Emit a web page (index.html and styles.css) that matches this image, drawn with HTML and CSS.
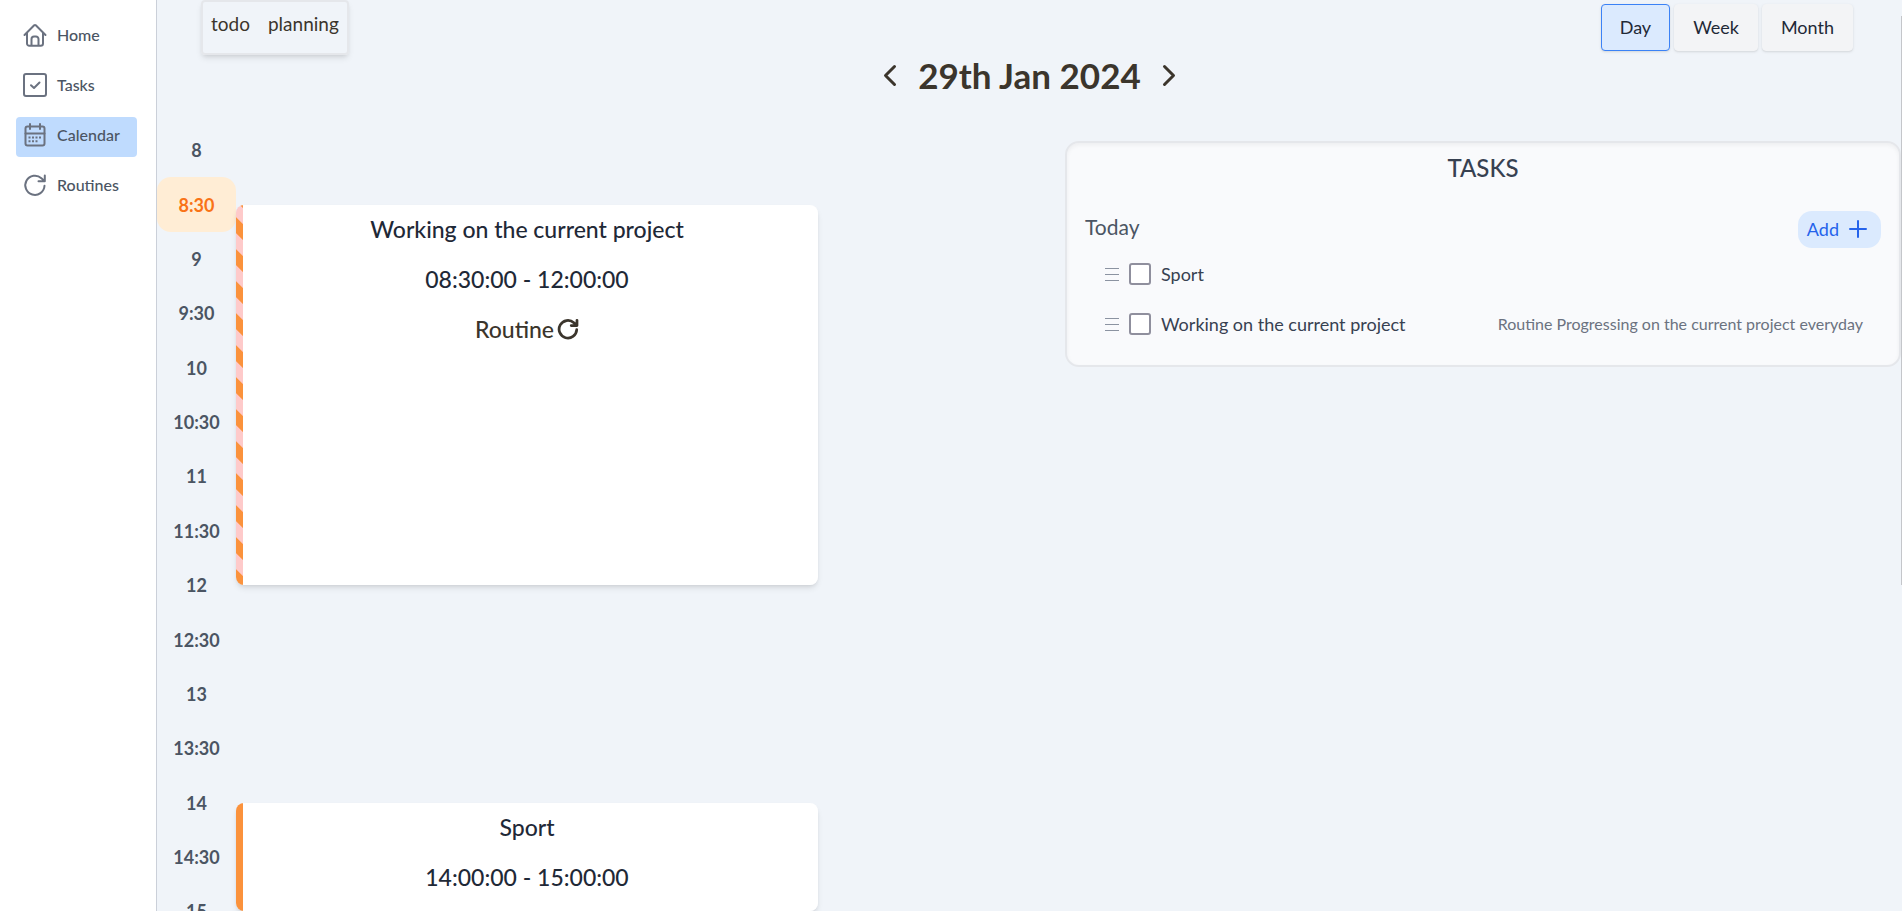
FILE: index.html
```html
<!DOCTYPE html>
<html lang="en">
<head>
<meta charset="utf-8">
<meta name="viewport" content="width=device-width, initial-scale=1">
<title>Calendar</title>
<link rel="stylesheet" href="styles.css">
</head>
<body>
<svg class="sprite" aria-hidden="true">
  <symbol id="rotate" viewBox="0 0 24 24"><path d="M21.500 12.800A9.600 9.600 0 1 1 18.400 5.200L21.500 8M21.800 2.500V8.300H15.500"/></symbol>
  <symbol id="grip" viewBox="0 0 14 14"><path d="M0 1.500H14M0 7.500H14M0 13.500H14"/></symbol>
</svg>
<div class="app">
  <nav class="sidebar">
    <a class="nav-item" href="#home">
      <svg class="nav-icon" viewBox="0 0 24 24"><path d="M1.500 12 11.200 2.300a1.200 1.200 0 0 1 1.600 0L22.500 12M4 9.800V20.500A2.300 2.300 0 0 0 6.300 22.800H17.700A2.300 2.300 0 0 0 20 20.500V9.800M8.500 22.500V16A2.500 2.500 0 0 1 11 13.500H13A2.500 2.500 0 0 1 15.500 16V22.500"/></svg>
      <span>Home</span>
    </a>
    <a class="nav-item" href="#tasks">
      <svg class="nav-icon" viewBox="0 0 24 24"><rect x="1" y="1" width="22" height="22" rx="2"/><path d="M8 12.200 11 15 16.500 9.500"/></svg>
      <span>Tasks</span>
    </a>
    <a class="nav-item active" href="#calendar" aria-current="page">
      <svg class="nav-icon" viewBox="0 0 24 24"><rect x="2.500" y="3.500" width="19" height="19" rx="2"/><path d="M2.500 10.500H21.500M7 1V6M17 1V6"/><path class="dots" d="M5.500 14.500h2M9 14.500h2M12.500 14.500h2M16 14.500h2M5.500 18.300h2M9 18.300h2M12.500 18.300h2"/></svg>
      <span>Calendar</span>
    </a>
    <a class="nav-item" href="#routines">
      <svg class="nav-icon"><use href="#rotate"/></svg>
      <span>Routines</span>
    </a>
  </nav>
  <main class="main">
    <header class="toolbar">
      <div class="modes">
        <button type="button">todo</button>
        <button type="button">planning</button>
      </div>
      <div class="views">
        <button type="button" class="selected">Day</button>
        <button type="button">Week</button>
        <button type="button">Month</button>
      </div>
    </header>
    <div class="date-bar">
      <button type="button" aria-label="Previous day"><svg viewBox="0 0 14 24"><path d="M11.500 3.500 2.500 12.500l9 9"/></svg></button>
      <h1>29th Jan 2024</h1>
      <button type="button" aria-label="Next day"><svg viewBox="0 0 14 24"><path d="M2.500 3.500 11.500 12.500l-9 9"/></svg></button>
    </div>
    <div class="content">
      <section class="schedule">
        <ol class="hours">
          <li>8</li><li class="now">8:30</li><li>9</li><li>9:30</li><li>10</li><li>10:30</li><li>11</li><li>11:30</li>
          <li>12</li><li>12:30</li><li>13</li><li>13:30</li><li>14</li><li>14:30</li><li>15</li><li>15:30</li>
        </ol>
        <div class="events">
          <article class="event striped">
            <h2>Working on the current project</h2>
            <p>08:30:00 - 12:00:00</p>
            <p class="routine">Routine<svg><use href="#rotate"/></svg></p>
          </article>
          <article class="event sport">
            <h2>Sport</h2>
            <p>14:00:00 - 15:00:00</p>
          </article>
        </div>
      </section>
      <section class="tasks">
        <h2>TASKS</h2>
        <div class="tasks-head">
          <h3>Today</h3>
          <button type="button" class="add">Add<svg viewBox="0 0 18 18"><path d="M9 1V17M1 9H17"/></svg></button>
        </div>
        <ul>
          <li><svg class="grip"><use href="#grip"/></svg><input type="checkbox" id="t1"><label for="t1">Sport</label></li>
          <li><svg class="grip"><use href="#grip"/></svg><input type="checkbox" id="t2"><label for="t2">Working on the current project</label><small>Routine Progressing on the current project everyday</small></li>
        </ul>
      </section>
    </div>
    <div class="scroll-thumb"></div>
  </main>
</div>
</body>
</html>
```
FILE: styles.css
```css
* { box-sizing: border-box; }
body {
  margin: 0;
  font: 18px/28px Lato, "Open Sans", sans-serif;
  color: #3b352c;
  background: #f0f4f9;
}
h1, h2, h3, p, ol, ul { margin: 0; padding: 0; }
ol, ul { list-style: none; }
button { font: inherit; color: inherit; background: none; border: 0; padding: 0; cursor: pointer; }
svg { fill: none; stroke: currentColor; stroke-width: 2; stroke-linecap: round; stroke-linejoin: round; }
.sprite { position: absolute; width: 0; height: 0; }

.app { display: flex; height: 100vh; overflow: hidden; }
.sidebar {
  flex: none;
  width: 157px;
  padding: 17px 19px 0 16px;
  display: flex;
  flex-direction: column;
  gap: 10px;
  background: #fff;
  border-right: 1px solid #cbd0d9;
}
.nav-item {
  display: flex;
  align-items: center;
  gap: 10px;
  height: 40px;
  padding: 0 7px 4px;
  border-radius: 4px;
  color: #4b5563;
  font-size: 16px;
  font-weight: 500;
  text-decoration: none;
}
.nav-item.active { background: #bfdbfe; }
.nav-icon { width: 24px; height: 24px; color: #6b7280; }
.dots { stroke-linecap: butt; stroke-width: 2; }

.main { position: relative; flex: 1; min-width: 0; }
.toolbar {
  display: flex;
  justify-content: space-between;
  align-items: flex-start;
  padding: 0 49px 0 44px;
}
.modes {
  display: flex;
  gap: 18px;
  height: 55px;
  padding: 8px 8px 17px;
  border: 2px solid #e5e7eb;
  border-radius: 4px;
  font-size: 19px;
  box-shadow: 0 4px 6px -1px #0000001a, 0 2px 4px -2px #0000001a;
}
.views { display: flex; gap: 4px; padding-top: 4px; }
.views button {
  height: 47px;
  padding: 0 18px 2px;
  border: 1px solid #f3f4f6;
  border-radius: 4px;
  background: #f3f4f6;
  color: #1f2937;
  box-shadow: 0 1px 3px #0000001a, 0 1px 2px -1px #0000001a;
}
.views .selected { background: #dbeafe; border-color: #3b82f6; }

.date-bar { display: flex; justify-content: center; align-items: center; gap: 21px; height: 40px; }
.date-bar h1 { font-size: 35px; line-height: 40px; font-weight: 700; }
.date-bar svg { display: block; width: 14px; height: 24px; stroke-width: 3; }

.content {
  display: grid;
  grid-template-columns: 661fr 247fr 837fr;
  align-items: start;
  padding-top: 28px;
}
.schedule { display: grid; grid-template-columns: 79px 1fr; height: 870px; }
.hours, .events { display: grid; grid-template-rows: repeat(16, 1fr); }
.hours li {
  display: flex;
  align-items: center;
  justify-content: center;
  font-weight: 700;
  color: #4b5563;
}
.hours .now { background: #ffedd5; color: #f97316; border-radius: 14px; }
.events { grid-template-rows: repeat(32, 1fr); }
.event {
  grid-row: 4 / 18;
  padding-top: 9px;
  border-radius: 8px;
  color: #1f2937;
  text-align: center;
  background: linear-gradient(to right, #fb923c 7px, #fff 7px);
  box-shadow: 0 4px 6px -1px #0000001a, 0 2px 4px -2px #0000001a;
}
.event h2, .event p { font-size: 23px; line-height: 30px; font-weight: 500; }
.event p { margin-top: 20px; }
.event.sport { grid-row: 26 / 30; }
.event.striped {
  background:
    linear-gradient(to right, transparent 7px, #fff 7px),
    linear-gradient(45deg, #fb923c 25%, #fecaca 25% 50%, #fb923c 50% 75%, #fecaca 75%) left bottom / 32px 32px;
}
.event .routine { display: flex; align-items: center; justify-content: center; gap: 3px; color: #3b352c; }
.routine svg { width: 22px; height: 22px; stroke-width: 3; }

.tasks {
  grid-column: 3;
  margin: 18px 1px 0 0;
  padding: 9px 18px 16px;
  border: 2px solid #e5e7eb;
  border-radius: 14px;
  background: #f9fafc;
  box-shadow: inset 0 2px 4px #0000000d;
  color: #374151;
}
.tasks h2 { text-align: center; font-size: 24px; line-height: 32px; font-weight: 500; }
.tasks-head { display: flex; justify-content: space-between; align-items: flex-start; padding-top: 27px; }
.tasks h3 { font-size: 21px; line-height: 32px; font-weight: 400; color: #4b5563; }
.add {
  display: flex;
  align-items: center;
  gap: 10px;
  height: 37px;
  padding: 0 14px 2px 9px;
  border-radius: 14px;
  background: #dbeafe;
  color: #2563eb;
}
.add svg { width: 18px; height: 18px; }
.tasks ul { padding: 1px 18px 0 20px; }
.tasks li { display: flex; align-items: center; height: 50px; }
.grip { width: 14px; height: 14px; margin-right: 10px; color: #8b93a1; stroke-width: 1; }
.tasks input {
  appearance: none;
  width: 22px;
  height: 22px;
  margin: 0 10px 0 0;
  border: 2px solid #8f8f9d;
  border-radius: 3px;
  background: #fff;
}
.tasks small { margin-left: auto; font-size: 16px; color: #6b7280; }
.scroll-thumb { position: absolute; top: 16px; right: 0; width: 1px; height: 62.5%; background: #c4c6ca; }
```
